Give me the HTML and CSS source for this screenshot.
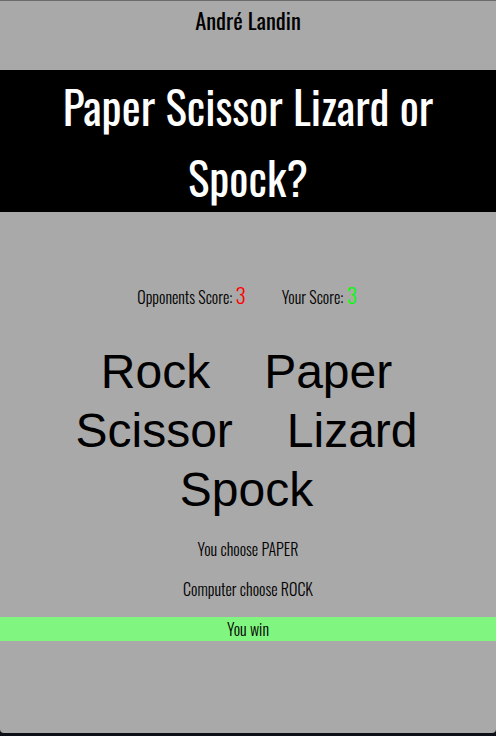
FILE: index.html
```html
<!DOCTYPE html>
<html lang="en">
<head>
<meta charset="utf-8">
<title>Paper Scissor Lizard or Spock?</title>
<link rel="stylesheet" href="styles.css">
</head>
<body>
<div class="page">
  <header class="top">
    <p class="author">André Landin</p>
    <h1 class="title">Paper Scissor Lizard or Spock?</h1>
  </header>
  <main class="game">
    <div class="scores">
      <span class="score">Opponents Score: <span class="num lose">3</span></span>
      <span class="score">Your Score: <span class="num win">3</span></span>
    </div>
    <div class="choices">
      <span class="choice">Rock</span>
      <span class="choice">Paper</span>
      <span class="choice">Scissor</span>
      <span class="choice">Lizard</span>
      <span class="choice">Spock</span>
    </div>
    <p class="msg">You choose PAPER</p>
    <p class="msg">Computer choose ROCK</p>
    <p class="msg result">You win</p>
  </main>
</div>
</body>
</html>
```
FILE: styles.css
```css
html, body {
  margin: 0;
  padding: 0;
  background: #0d1117;
}
.page {
  height: 733px;
  box-sizing: border-box;
  background: #a9a9a9;
  border-top: 1px solid #6b6b6b;
  border-radius: 0 0 4px 4px;
  font-family: "Oswald", "Liberation Sans", sans-serif;
  color: #000;
  text-align: center;
  overflow: hidden;
}
.top {
  padding-top: 1px;
}
.author {
  margin: 0;
  font-size: 22.5px;
  line-height: 36px;
  font-weight: 400;
}
.title {
  margin: 32px 0;
  background: #000;
  color: #fff;
  font-size: 45px;
  font-weight: 400;
  line-height: 71px;
  padding: 0 40px;
}
.game {
  padding-top: 39px;
}
.scores {
  display: flex;
  justify-content: center;
  align-items: baseline;
  gap: 36px;
  padding-right: 2px;
  font-weight: 300;
  font-size: 16px;
  line-height: 24px;
}
.num {
  font-size: 21px;
}
.lose { color: #ff0000; }
.win { color: #00ff00; }
.choices {
  display: flex;
  flex-wrap: wrap;
  justify-content: center;
  column-gap: 54px;
  row-gap: 4px;
  padding: 0 3px 0 0;
  margin: 35px 0 20px;
  font-family: "Liberation Sans", Arial, sans-serif;
  font-size: 48px;
  line-height: 55px;
}
.msg {
  margin: 16px 0;
  font-size: 16px;
  font-weight: 300;
}
.result {
  background: #80f580;
}
```
